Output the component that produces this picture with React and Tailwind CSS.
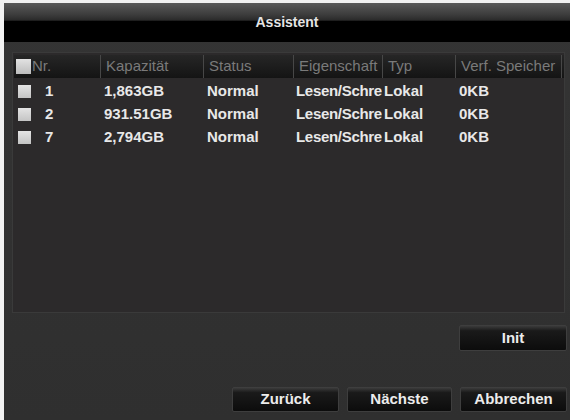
import React from "react";

const cols = [
  { w: "w-[86px]", label: "Nr." },
  { w: "w-[103px]", label: "Kapazität" },
  { w: "w-[90px]", label: "Status" },
  { w: "w-[89px]", label: "Eigenschaft" },
  { w: "w-[73px]", label: "Typ" },
  { w: "w-[107px]", label: "Verf. Speicher" },
];

const rows = [
  ["1", "1,863GB", "Normal", "Lesen/Schreiben", "Lokal", "0KB"],
  ["2", "931.51GB", "Normal", "Lesen/Schreiben", "Lokal", "0KB"],
  ["7", "2,794GB", "Normal", "Lesen/Schreiben", "Lokal", "0KB"],
];

function Btn({ children, className = "" }) {
  return (
    <div
      className={
        "flex items-center justify-center rounded-[2px] border border-[#3e3e3e] bg-[linear-gradient(to_bottom,#3a3a3a_0%,#1a1a1a_20%,#0c0c0c_100%)] text-[15px] font-bold text-[#ececec] " +
        className
      }
    >
      {children}
    </div>
  );
}

export default function App() {
  return (
    <div
      className="w-[570px] h-[420px] bg-[#f2f2f2] pl-[4px] pt-[3px] overflow-hidden"
      style={{ fontFamily: '"Liberation Sans", Arial, sans-serif' }}
    >
      <div className="flex h-full w-full flex-col bg-[linear-gradient(to_bottom,#343434_0%,#2f2f2f_100%)]">
        {/* Title bar */}
        <div className="flex h-[39px] items-center justify-center bg-[linear-gradient(to_bottom,#5a5a5a_0%,#3c3c3c_30%,#2a2a2a_44%,#000_47%,#000_100%)]">
          <span className="text-[14px] font-bold text-[#e4e4e4]">Assistent</span>
        </div>

        {/* Table panel */}
        <div className="ml-[8px] mr-[5px] mt-[10px] h-[261px] border border-[#3a3a3a] bg-[#2c2a2b] pl-[1px] pt-[2px]">
          <div className="flex h-[23px] bg-[linear-gradient(to_bottom,#262626_0%,#141414_100%)]">
            {cols.map((c, i) => (
              <div
                key={i}
                className={
                  c.w +
                  " flex items-center overflow-hidden whitespace-nowrap text-[15px] text-[#7a7a7a] " +
                  (i > 0 ? "border-l border-[#474747] pl-[5px] " : "pl-[2px] ") +
                  (i === cols.length - 1 ? "border-r border-[#474747]" : "")
                }
              >
                {i === 0 && (
                  <span className="mr-[1px] inline-block h-[15px] w-[15px] bg-[linear-gradient(to_bottom,#e2e2e2,#bdbdbd)]" />
                )}
                {c.label}
              </div>
            ))}
          </div>
          <div className="mt-[2px]">
            {rows.map((r, ri) => (
              <div key={ri} className="flex h-[23px]">
                {r.map((cell, ci) => (
                  <div
                    key={ci}
                    className={
                      cols[ci].w +
                      " flex items-center overflow-hidden whitespace-nowrap text-[15px] font-bold text-[#e8e8e8] " +
                      (ci === 3
                        ? "pl-[3px] tracking-[-0.3px]"
                        : ci === 4
                        ? "pl-[2px]"
                        : "pl-[4px]")
                    }
                  >
                    {ci === 0 && (
                      <span className="mr-[14px] inline-block h-[13px] w-[13px] bg-[linear-gradient(to_bottom,#e4e4e4,#c4c4c4)]" />
                    )}
                    {cell}
                  </div>
                ))}
              </div>
            ))}
          </div>
        </div>

        {/* Init */}
        <div className="mr-[3px] mt-[12px] flex justify-end">
          <Btn className="h-[26px] w-[108px]">Init</Btn>
        </div>

        {/* Bottom buttons */}
        <div className="mr-[3px] mt-[36px] flex justify-end gap-[8px]">
          <Btn className="h-[25px] w-[107px]">Zurück</Btn>
          <Btn className="h-[25px] w-[105px]">Nächste</Btn>
          <Btn className="h-[25px] w-[107px]">Abbrechen</Btn>
        </div>
      </div>
    </div>
  );
}
